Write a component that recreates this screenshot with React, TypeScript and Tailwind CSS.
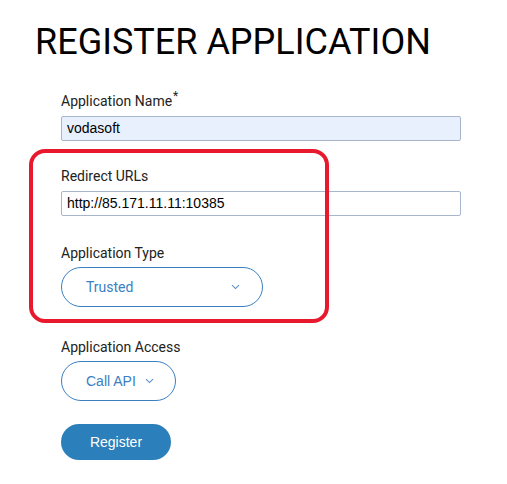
import React from "react";

function Chevron() {
  return (
    <svg width="9" height="6" viewBox="0 0 9 6" fill="none" className="shrink-0">
      <path d="M1 1.2L4.5 4.6L8 1.2" stroke="#5a8fc6" strokeWidth="1.1" />
    </svg>
  );
}

export default function App() {
  return (
    <div className="w-[507px] h-[484px] bg-white relative overflow-hidden" style={{ fontFamily: "Roboto, 'Liberation Sans', sans-serif" }}>
      <h1 className="pl-[35px] pt-[20px] text-[36px] leading-[44px] font-normal text-black tracking-[0px]">
        REGISTER APPLICATION
      </h1>
      <div className="ml-[61px] mt-[27px] w-[400px] flex flex-col">
        <label className="text-sm leading-5 text-[#222]">
          Application Name<span className="text-[12px] relative top-[-6px] ml-[1px] leading-none">*</span>
        </label>
        <div className="mt-[5px] h-[25px] w-[400px] rounded-[2px] border border-[#a7b6cd] bg-[#e8f0fe] flex items-center px-[5px] text-[14px] text-black" style={{ fontFamily: "'Liberation Sans', Arial, sans-serif" }}>
          vodasoft
        </div>
        <div className="relative">
          <div className="absolute left-[-32px] top-[8px] w-[300px] h-[174px] border-[4px] border-[#e8192c] rounded-[16px] pointer-events-none" />
          <label className="block mt-[25px] text-sm leading-5 text-[#222]">Redirect URLs</label>
          <div className="mt-[5px] h-[25px] w-[400px] rounded-[2px] border border-[#a7b6cd] bg-white flex items-center px-[5px] text-[14px] text-black" style={{ fontFamily: "'Liberation Sans', Arial, sans-serif" }}>
            http://85.171.11.11:10385
          </div>
          <label className="block mt-[27px] text-sm leading-5 text-[#222]">Application Type</label>
          <div className="mt-[4px] h-[40px] w-[202px] rounded-full border border-[#3a80bf] flex items-center pl-[24px] pr-[22px] justify-between text-[14px] text-[#3a80c2]">
            <span>Trusted</span>
            <Chevron />
          </div>
        </div>
        <label className="block mt-[30px] text-sm leading-5 text-[#222]">Application Access</label>
        <div className="mt-[4px] h-[40px] w-[115px] rounded-full border border-[#3a80bf] flex items-center pl-[24px] gap-[9px] text-[14px] text-[#3a80c2]" style={{ fontFamily: "'Liberation Sans', Arial, sans-serif" }}>
          <span>Call API</span>
          <Chevron />
        </div>
        <button className="mt-[23px] h-[36px] w-[110px] rounded-full bg-[#2b7fba] text-white text-[14px] flex items-center justify-center" style={{ fontFamily: "'Liberation Sans', Arial, sans-serif" }}>
          Register
        </button>
      </div>
    </div>
  );
}
